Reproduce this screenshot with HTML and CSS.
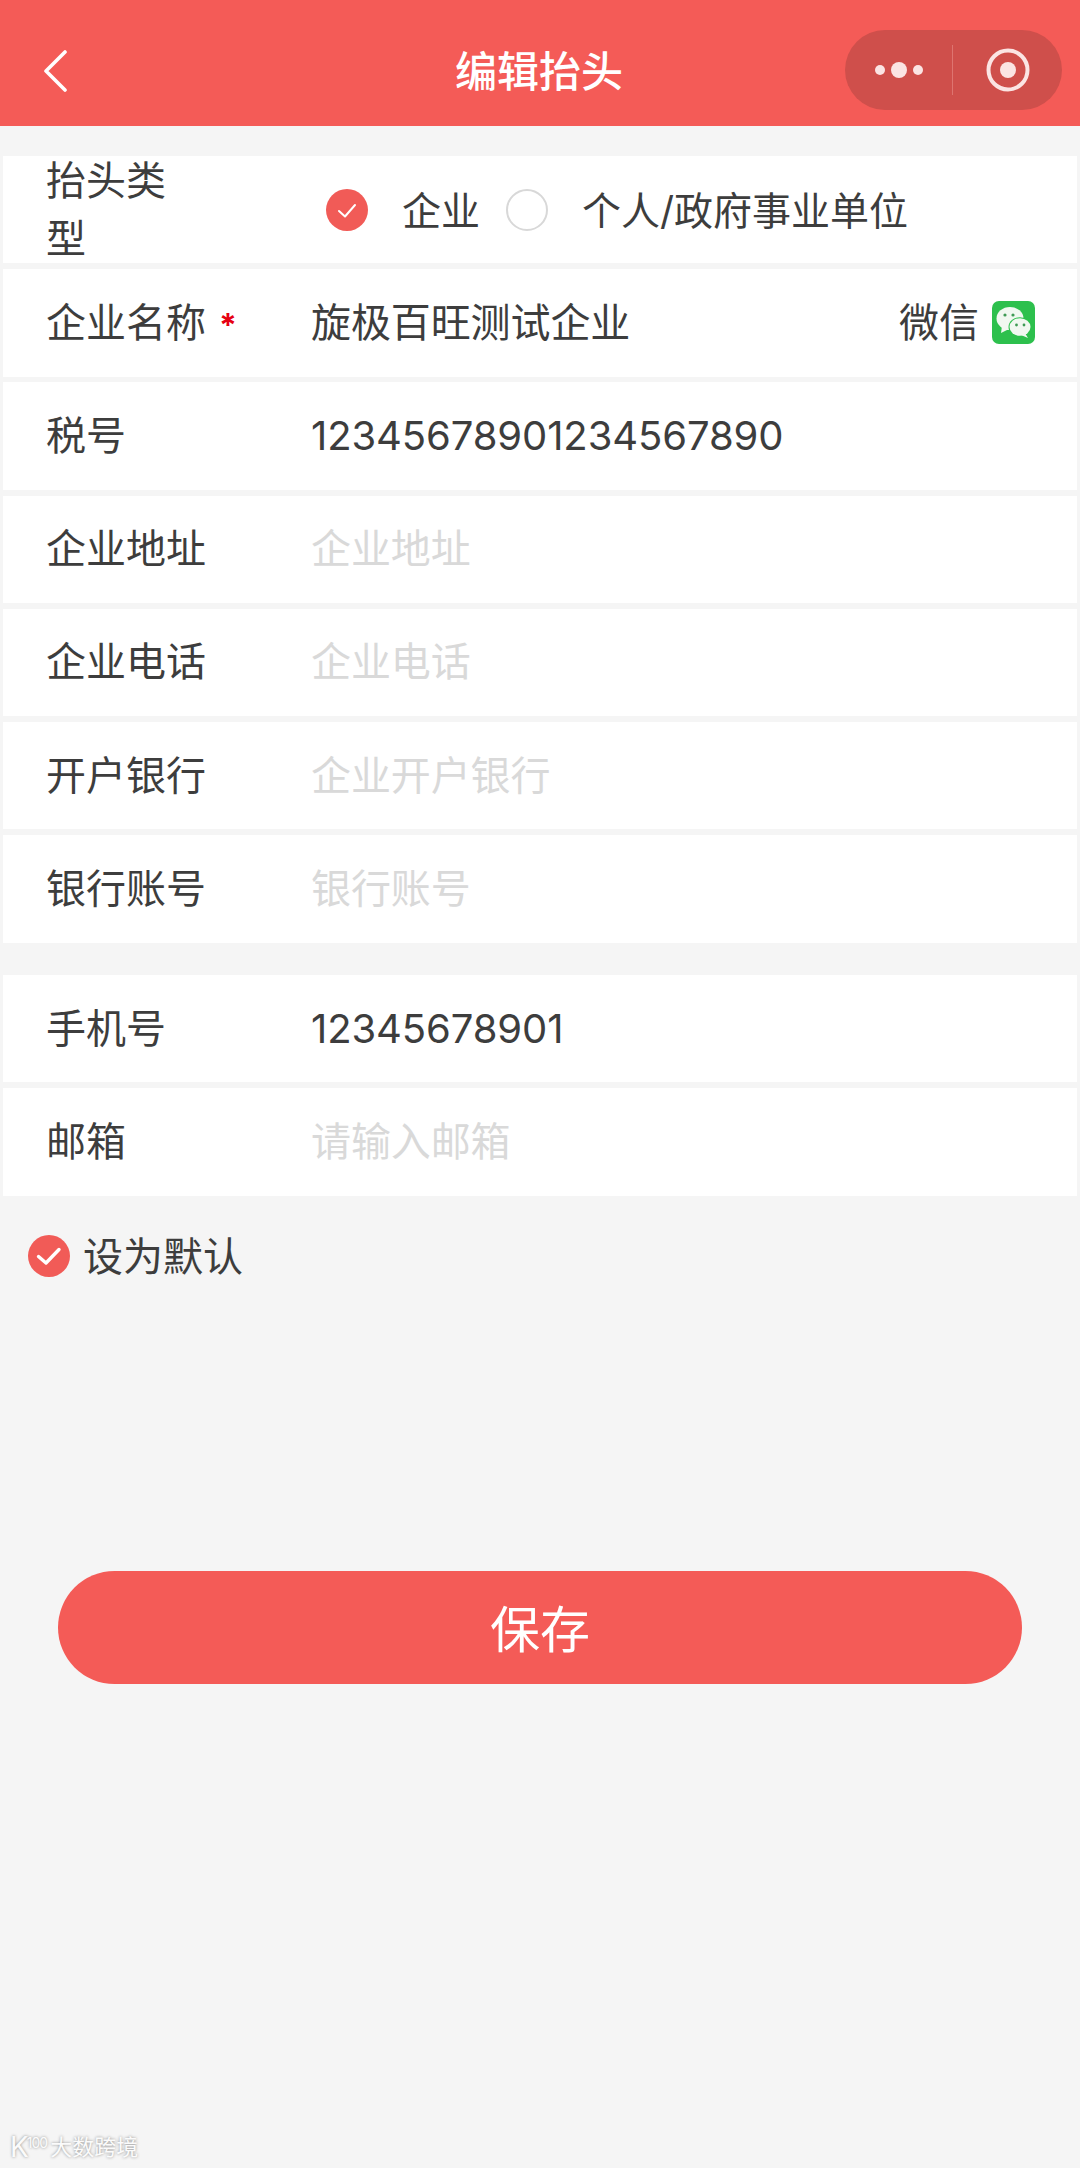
FILE: index.html
```html
<!DOCTYPE html>
<html lang="zh-CN">
<head>
    <meta charset="UTF-8">
    <meta name="viewport" content="width=device-width, initial-scale=1.0">
    <title>编辑抬头</title>
    <link rel="stylesheet" href="styles.css">
</head>
<body>
    <div class="nav-bar">
        <svg class="back-icon" width="24" height="42" viewBox="0 0 24 42">
            <path d="M22 2 L3 21 L22 40" fill="none" stroke="#fff" stroke-width="3.6" stroke-linecap="round" stroke-linejoin="round"/>
        </svg>
        <div class="nav-title">编辑抬头</div>
        <div class="capsule">
            <svg class="capsule-dots" width="56" height="20" viewBox="0 0 56 20">
                <circle cx="9" cy="10" r="5" fill="#fbe4e3"/>
                <circle cx="28" cy="10" r="8" fill="#fbe4e3"/>
                <circle cx="47" cy="10" r="5" fill="#fbe4e3"/>
            </svg>
            <div class="capsule-line"></div>
            <svg class="capsule-target" width="44" height="44" viewBox="0 0 44 44">
                <circle cx="22" cy="22" r="19.5" fill="none" stroke="#fbe4e3" stroke-width="4"/>
                <circle cx="22" cy="22" r="8" fill="#fbe4e3"/>
            </svg>
        </div>
    </div>

    <div class="form-group first">
        <div class="form-row">
            <div class="label label-wrap">抬头类型</div>
            <div class="type-options">
                <svg class="check" width="42" height="42" viewBox="0 0 42 42">
                    <circle cx="21" cy="21" r="21" fill="#f15b57"/>
                    <path d="M13 22 L19 27.5 L29 16" fill="none" stroke="#fff" stroke-width="2" stroke-linecap="round" stroke-linejoin="round"/>
                </svg>
                <span class="type-name">企业</span>
                <span class="radio"></span>
                <span class="type-name">个人/政府事业单位</span>
            </div>
        </div>
        <div class="form-row">
            <div class="label">企业名称<span class="required">*</span></div>
            <div class="value">旋极百旺测试企业</div>
            <div class="wechat">
                <span>微信</span>
                <svg width="43" height="43" viewBox="0 0 43 43">
                    <rect width="43" height="43" rx="7" fill="#2dc04d"/>
                    <ellipse cx="18" cy="17.5" rx="13.5" ry="11.5" fill="#f1f8f1"/>
                    <path d="M10 25 L9 32 L17 28 Z" fill="#f1f8f1"/>
                    <ellipse cx="28" cy="26" rx="11.5" ry="9.8" fill="#2dc04d"/>
                    <ellipse cx="28" cy="26" rx="10.5" ry="8.8" fill="#f1f8f1"/>
                    <path d="M33 32 L36 37 L29 34 Z" fill="#f1f8f1"/>
                    <circle cx="13" cy="14" r="1.6" fill="#3f9a55"/>
                    <circle cx="21" cy="14" r="1.6" fill="#3f9a55"/>
                    <circle cx="24.5" cy="24" r="1.4" fill="#3f9a55"/>
                    <circle cx="32" cy="24" r="1.4" fill="#3f9a55"/>
                </svg>
            </div>
        </div>
        <div class="form-row">
            <div class="label">税号</div>
            <div class="value">12345678901234567890</div>
        </div>
        <div class="form-row">
            <div class="label">企业地址</div>
            <div class="value placeholder">企业地址</div>
        </div>
        <div class="form-row">
            <div class="label">企业电话</div>
            <div class="value placeholder">企业电话</div>
        </div>
        <div class="form-row">
            <div class="label">开户银行</div>
            <div class="value placeholder">企业开户银行</div>
        </div>
        <div class="form-row">
            <div class="label">银行账号</div>
            <div class="value placeholder">银行账号</div>
        </div>
    </div>

    <div class="form-group second">
        <div class="form-row">
            <div class="label">手机号</div>
            <div class="value">12345678901</div>
        </div>
        <div class="form-row">
            <div class="label">邮箱</div>
            <div class="value placeholder">请输入邮箱</div>
        </div>
    </div>

    <div class="default-row">
        <svg class="check" width="42" height="42" viewBox="0 0 42 42">
            <circle cx="21" cy="21" r="21" fill="#f15b57"/>
            <path d="M10.5 21.5 L18 28 L31 14.5" fill="none" stroke="#fff" stroke-width="3.4" stroke-linecap="round" stroke-linejoin="round"/>
        </svg>
        <span class="default-text">设为默认</span>
    </div>

    <button class="save-button">保存</button>

    <div class="watermark">
        <span class="watermark-k">K</span><span class="watermark-num">100</span>
        <span class="watermark-name">大数跨境</span>
    </div>
</body>
</html>
```

FILE: styles.css
```css
* {
    box-sizing: border-box;
}
body {
    position: relative;
    margin: 0;
    height: 2168px;
    overflow: hidden;
    background-color: #f5f5f5;
    color: #3d3d3d;
    font-family: Inter, "Noto Sans CJK SC", sans-serif;
    font-size: 40px;
}
.nav-bar {
    position: relative;
    display: flex;
    align-items: center;
    height: 126px;
    padding-left: 43px;
    background-color: #f45b57;
}
.back-icon {
    margin-top: 16px;
}
.nav-title {
    position: absolute;
    left: 0;
    right: 2px;
    top: 47px;
    color: white;
    font-size: 42px;
    font-weight: 500;
    line-height: 50px;
    text-align: center;
}
.capsule {
    display: flex;
    align-items: center;
    position: absolute;
    left: 845px;
    top: 30px;
    width: 217px;
    height: 80px;
    border-radius: 40px;
    background-color: #cf4f4b;
}
.capsule-dots {
    margin-left: 26px;
}
.capsule-line {
    width: 1px;
    height: 50px;
    margin-left: 25px;
    background-color: #de7470;
}
.capsule-target {
    margin-left: 33px;
}
.form-group {
    display: flex;
    flex-direction: column;
    gap: 5.8px;
    margin: 0 3px;
}
.form-group.first {
    margin-top: 30px;
}
.form-group.second {
    margin-top: 32.5px;
}
.form-row {
    display: flex;
    align-items: center;
    height: 107.4px;
    padding-left: 43px;
    background-color: white;
}
.label {
    flex: none;
    width: 265px;
    line-height: 58px;
}
.label-wrap {
    width: 130px;
}
.required {
    margin-left: 13px;
    color: #e60012;
    font-size: 32px;
    font-weight: 700;
    line-height: 1;
}
.value {
    flex: 1;
    letter-spacing: -0.1px;
    line-height: 56px;
}
.placeholder {
    color: #d9d9d9;
}
.type-options {
    display: flex;
    align-items: center;
    margin-left: 150px;
    line-height: 54px;
}
.type-name {
    margin-left: 34px;
    padding-top: 3px;
    font-size: 39px;
}
.radio {
    width: 42px;
    height: 42px;
    margin-left: 26px;
    border: 2px solid #d8d8d8;
    border-radius: 50%;
}
.wechat {
    display: flex;
    align-items: center;
    gap: 13px;
    margin-right: 42px;
    line-height: 54px;
}
.default-row {
    display: flex;
    align-items: center;
    gap: 13px;
    height: 42px;
    margin: 39px 0 0 28px;
    line-height: 42px;
}
.default-text {
    padding-top: 2px;
}
.save-button {
    display: block;
    width: 964px;
    height: 113px;
    margin: 294px 0 0 58px;
    padding-bottom: 4px;
    border: none;
    border-radius: 57px;
    background-color: #f45b57;
    color: white;
    font-family: inherit;
    font-size: 50px;
}
.watermark {
    position: absolute;
    left: 10px;
    bottom: 6px;
    display: flex;
    align-items: flex-end;
    color: #fbfbfb;
    line-height: 30px;
    text-shadow: 0 0 3px #8a8a8a;
}
.watermark-k {
    font-size: 28px;
}
.watermark-num {
    margin: 0 3px 10px -2px;
    font-size: 14px;
    letter-spacing: -1px;
    line-height: 18px;
}
.watermark-name {
    font-size: 22px;
}
```
